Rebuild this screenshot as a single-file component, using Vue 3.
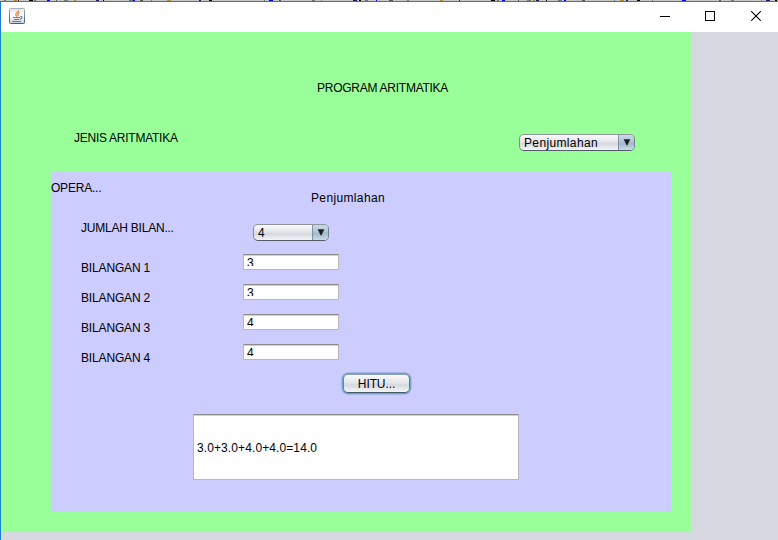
<script setup>
import { ref } from 'vue'

const numbers = ref(['3', '3', '4', '4'])
const colors = ['#777', '#b58a35', '#191970', '#000', '#66788c', '#0000d8', '#555']
// Sliver of the window behind the frame
const specks = [4, 14, 18, 29, 34, 47, 56, 64, 74, 96, 103, 129, 133, 140, 151, 167, 199, 209, 264, 269, 279, 312, 321, 353, 359, 365, 376, 389, 407, 440, 459, 491, 497, 502, 518, 527, 533, 536, 546, 558, 564, 582, 614, 620, 626, 637, 652, 682, 719, 731, 761, 766, 775].map((x, i) => ({
  x,
  w: [2, 3, 1, 4][i % 4],
  color: colors[i % colors.length],
}))
</script>

<template>
  <div class="screen">
    <svg class="behind" width="778" height="1" shape-rendering="crispEdges">
      <rect v-for="s in specks" :key="s.x" :x="s.x" y="0" :width="s.w" height="1" :fill="s.color" />
    </svg>
    <div class="window">
      <header class="titlebar">
        <svg class="java" width="16" height="16" viewBox="0 0 16 16">
          <defs>
            <linearGradient id="jbg" x1="0" y1="0" x2="0" y2="1">
              <stop offset="0" stop-color="#dfe5ec" />
              <stop offset=".45" stop-color="#ffffff" />
              <stop offset="1" stop-color="#c9d2dd" />
            </linearGradient>
            <linearGradient id="jbd" x1="0" y1="0" x2="0" y2="1">
              <stop offset="0" stop-color="#a5b0bc" />
              <stop offset="1" stop-color="#3f5d7c" />
            </linearGradient>
          </defs>
          <rect x=".5" y=".5" width="15" height="15" rx="1" fill="url(#jbg)" stroke="url(#jbd)" />
          <path d="M9.8 2.3C9.3 4.3 6.2 4.8 6.8 6.7L8 8.6M10.6 4.6C8.4 5.5 8.3 6.1 9.3 7.2L8.8 8.2" fill="none" stroke="#e8812f" stroke-width="1.2" />
          <path d="M4 9.5H11M5 11.5H10.3M11.3 8.5C13.8 8.1 13.3 10.6 11 11.3M3.2 13.5H12" fill="none" stroke="#5d7d9b" stroke-width="1.1" />
        </svg>
        <div class="controls">
          <svg width="10" height="10" shape-rendering="crispEdges"><path d="M0 5.5H10" stroke="#000" /></svg>
          <svg width="10" height="10" shape-rendering="crispEdges"><path d="M.5 .5H9.5V9.5H.5Z" fill="none" stroke="#000" /></svg>
          <svg width="10" height="10"><path d="M.2 .2L9.8 9.8M9.8 .2L.2 9.8" stroke="#000" stroke-width="1.1" /></svg>
        </div>
      </header>

      <main class="program">
        <h1 class="caps heading">PROGRAM ARITMATIKA</h1>
        <div class="kind">
          <span class="caps">JENIS ARITMATIKA</span>
          <button class="combo wide">
            <span class="value lower">Penjumlahan</span>
            <span class="arrow"><svg width="8" height="8"><path d="M.6 .3H7.4L4 7.1Z" fill="#1b1f24" /></svg></span>
          </button>
        </div>

        <section class="operation">
          <div class="top">
            <span class="legend">OPERA...</span>
            <span class="lower name">Penjumlahan</span>
          </div>
          <div class="row count">
            <span class="label jumlah">JUMLAH BILAN...</span>
            <button class="combo small">
              <span class="value">4</span>
              <span class="arrow"><svg width="8" height="8"><path d="M.6 .3H7.4L4 7.1Z" fill="#1b1f24" /></svg></span>
            </button>
          </div>
          <div v-for="(n, i) in numbers" :key="i" class="row">
            <span class="label">BILANGAN {{ i + 1 }}</span>
            <div class="field"><span>{{ n }}</span></div>
          </div>
          <button class="calc">HITU...</button>
          <div class="result">3.0+3.0+4.0+4.0=14.0</div>
        </section>
      </main>
    </div>
  </div>
</template>

<style>
body {
  margin: 0;
  overflow: hidden;
}
</style>

<style scoped>
* {
  box-sizing: border-box;
}
.screen {
  width: 778px;
  height: 540px;
  overflow: hidden;
  background: #d6d9df;
  font: 12px/20px "Liberation Sans", Arial, sans-serif;
  color: #000;
  white-space: nowrap;
}
.behind {
  display: block;
  background: #c8c8c8;
}
.window {
  height: 539px;
  border-top: 1px solid #1b7fd2;
  border-left: 1px solid #1b7fd2;
}
.titlebar {
  height: 30px;
  background: #fff;
  display: flex;
  justify-content: space-between;
  padding: 6px 17px 0 8px;
}
.controls {
  display: flex;
  gap: 35px;
  padding-top: 3px;
}
.controls svg,
.java {
  display: block;
}
.controls svg:last-child {
  margin-left: 1px;
}
.program {
  width: 690px;
  height: 500px;
  background: #99ff99;
  padding: 46px 20px 0 50px;
}
.heading {
  margin: 0 0 0 266px;
  font: inherit;
}
.caps {
  letter-spacing: -0.26px;
}
.lower {
  letter-spacing: 0.36px;
}
.kind {
  height: 74px;
  padding: 30px 36px 0 23px;
  display: flex;
  justify-content: space-between;
}
.combo {
  height: 17px;
  padding: 0;
  display: flex;
  border: 1px solid;
  border-color: #8e939c #75808e #535b66 #858b95;
  border-radius: 5px;
  overflow: hidden;
  background: linear-gradient(#fafafc 0%, #e4e6ea 45%, #d5d8de 58%, #f2f4f7 100%);
  font: 12px/16px "Liberation Sans", Arial, sans-serif;
  color: #000;
}
.value {
  flex: 1;
  text-align: left;
  padding-left: 4px;
}
.arrow {
  width: 16px;
  height: 15px;
  border-left: 1px solid #7d92a6;
  background: linear-gradient(#cbd9e6 0%, #b1c4d4 45%, #a3b9cb 58%, #c9dbe8 100%);
  padding: 4px 0 0 4px;
}
.arrow svg {
  display: block;
}
.wide {
  width: 116px;
  margin-top: 6px;
}
.small {
  width: 76px;
  margin: 6px 0 0 10px;
}
.operation {
  width: 620px;
  height: 340px;
  background: #ccccff;
  padding-top: 6px;
}
.top {
  height: 40px;
  display: flex;
}
.legend {
  width: 260px;
  letter-spacing: -0.22px;
}
.name {
  padding-top: 10px;
}
.row {
  height: 30px;
  display: flex;
  padding-left: 30px;
}
.count {
  height: 40px;
}
.label {
  width: 162px;
  letter-spacing: -0.16px;
}
.jumlah {
  letter-spacing: -0.22px;
}
.field {
  width: 96px;
  height: 16px;
  margin-top: -4px;
  background: #fff;
  border: 1px solid #b8b8b8;
  border-top-color: #8c8c8c;
  box-shadow: inset 0 1px 0 #d0d0d0;
  padding: 3px 0 0 3px;
}
.field span {
  display: block;
  height: 8px;
  line-height: 11px;
  overflow: hidden;
}
.calc {
  display: block;
  width: 67px;
  height: 19px;
  margin: -4px 0 0 292px;
  padding: 0;
  border: 1px solid;
  border-color: #8c9aa8 #627485 #465766 #71818f;
  border-radius: 5px;
  box-shadow: 0 0 0 1.4px #73a4d1;
  background: linear-gradient(#fafafc 0%, #e4e6ea 45%, #d5d8de 58%, #f5f6f9 100%);
  font: 12px/18px "Liberation Sans", Arial, sans-serif;
  color: #000;
  letter-spacing: -0.1px;
}
.result {
  width: 326px;
  height: 66px;
  margin: 21px 0 0 142px;
  background: #fff;
  border: 1px solid #b8b8b8;
  border-top-color: #8c8c8c;
  box-shadow: inset 0 1px 0 #d0d0d0;
  line-height: 66px;
  padding-left: 3px;
  letter-spacing: 0.1px;
}
</style>
